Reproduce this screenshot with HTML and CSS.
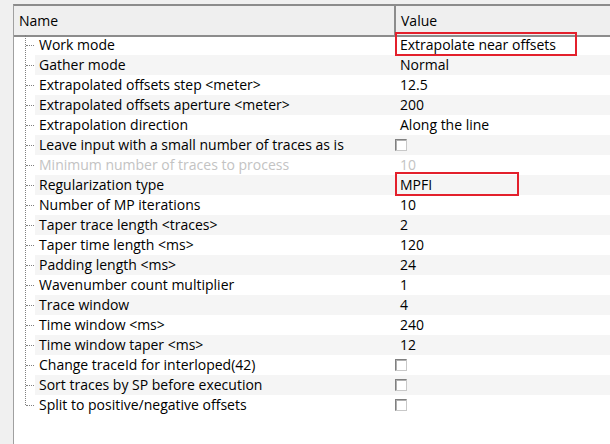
FILE: index.html
```html
<!DOCTYPE html>
<html lang="en">
<head>
    <meta charset="UTF-8">
    <title>Parameters</title>
    <link rel="stylesheet" href="styles.css">
</head>
<body>

<div class="grid">
    <div class="header">
        <div class="col-name">Name</div>
        <div class="col-value">Value</div>
    </div>

    <div class="rows">
        <div class="row"><div class="name">Work mode</div><div class="value"><span class="mark wide">Extrapolate near offsets</span></div></div>
        <div class="row"><div class="name">Gather mode</div><div class="value">Normal</div></div>
        <div class="row"><div class="name">Extrapolated offsets step &lt;meter&gt;</div><div class="value">12.5</div></div>
        <div class="row"><div class="name">Extrapolated offsets aperture &lt;meter&gt;</div><div class="value">200</div></div>
        <div class="row"><div class="name">Extrapolation direction</div><div class="value">Along the line</div></div>
        <div class="row"><div class="name">Leave input with a small number of traces as is</div><div class="value"><span class="check"></span></div></div>
        <div class="row disabled"><div class="name">Minimum number of traces to process</div><div class="value">10</div></div>
        <div class="row"><div class="name">Regularization type</div><div class="value"><span class="mark narrow">MPFI</span></div></div>
        <div class="row"><div class="name">Number of MP iterations</div><div class="value">10</div></div>
        <div class="row"><div class="name">Taper trace length &lt;traces&gt;</div><div class="value">2</div></div>
        <div class="row"><div class="name">Taper time length &lt;ms&gt;</div><div class="value">120</div></div>
        <div class="row"><div class="name">Padding length &lt;ms&gt;</div><div class="value">24</div></div>
        <div class="row"><div class="name">Wavenumber count multiplier</div><div class="value">1</div></div>
        <div class="row"><div class="name">Trace window</div><div class="value">4</div></div>
        <div class="row"><div class="name">Time window &lt;ms&gt;</div><div class="value">240</div></div>
        <div class="row"><div class="name">Time window taper &lt;ms&gt;</div><div class="value">12</div></div>
        <div class="row"><div class="name">Change traceId for interloped(42)</div><div class="value"><span class="check"></span></div></div>
        <div class="row"><div class="name">Sort traces by SP before execution</div><div class="value"><span class="check"></span></div></div>
        <div class="row last"><div class="name">Split to positive/negative offsets</div><div class="value"><span class="check"></span></div></div>
    </div>
</div>

</body>
</html>
```

FILE: styles.css
```css
body {
    margin: 0;
    background-color: #f0f0f0;
    font-family: "Open Sans", "Noto Sans", sans-serif;
    font-size: 14px;
    color: #000;
}

.grid {
    margin: 4px 0 0 13px;
    height: 440px;
    background-color: white;
    border-top: 2px solid #8c8c8c;
    border-left: 1px solid #a0a0a0;
    box-sizing: border-box;
    overflow: hidden;
}

.header {
    display: flex;
    height: 26px;
    background-color: #efefef;
    border-bottom: 2px solid #8c8c8c;
    line-height: 23px;
    padding-top: 3px;
    box-sizing: content-box;
}

.header .col-name {
    width: 382px;
    margin-top: -3px;
    padding: 3px 0 0 5px;
    border-right: 2px solid #8c8c8c;
    box-sizing: border-box;
}

.header .col-value {
    padding-left: 5px;
}

.rows {
    position: relative;
    margin-top: -2px;
}

/* dotted tree line on the left */
.rows::before {
    content: "";
    position: absolute;
    left: 11px;
    top: 0;
    height: 370px;
    border-left: 1px dotted #808080;
}

.row {
    display: flex;
    height: 20px;
    line-height: 20px;
    white-space: nowrap;
}

.row .name {
    position: relative;
    width: 360px;
    margin-left: 21px;
    padding-left: 4px;
    box-sizing: border-box;
}

.row .name::before {
    content: "";
    position: absolute;
    left: -9px;
    top: 10px;
    width: 8px;
    border-top: 1px dotted #808080;
}

.row .value {
    flex: 1;
    padding-left: 5px;
}

.row:nth-child(even) .name,
.row:nth-child(even) .value {
    background-color: #f5f5f5;
}

.row.disabled {
    color: #c3c3c3;
}

.mark {
    display: inline-block;
    position: relative;
}

.mark::after {
    content: "";
    position: absolute;
    top: -3px;
    left: -5px;
    height: 20px;
    border: 2px solid #e3202c;
}

.mark.wide::after {
    width: 178px;
}

.mark.narrow::after {
    width: 120px;
}

.check {
    display: inline-block;
    width: 10px;
    height: 10px;
    vertical-align: -1px;
    margin-left: -5px;
    background-color: white;
    border-top: 1px solid #808080;
    border-left: 1px solid #808080;
    border-right: 1px solid #c8c8c8;
    border-bottom: 1px solid #c8c8c8;
    box-shadow: inset 1px 1px 0 #b0b0b0;
}
```
